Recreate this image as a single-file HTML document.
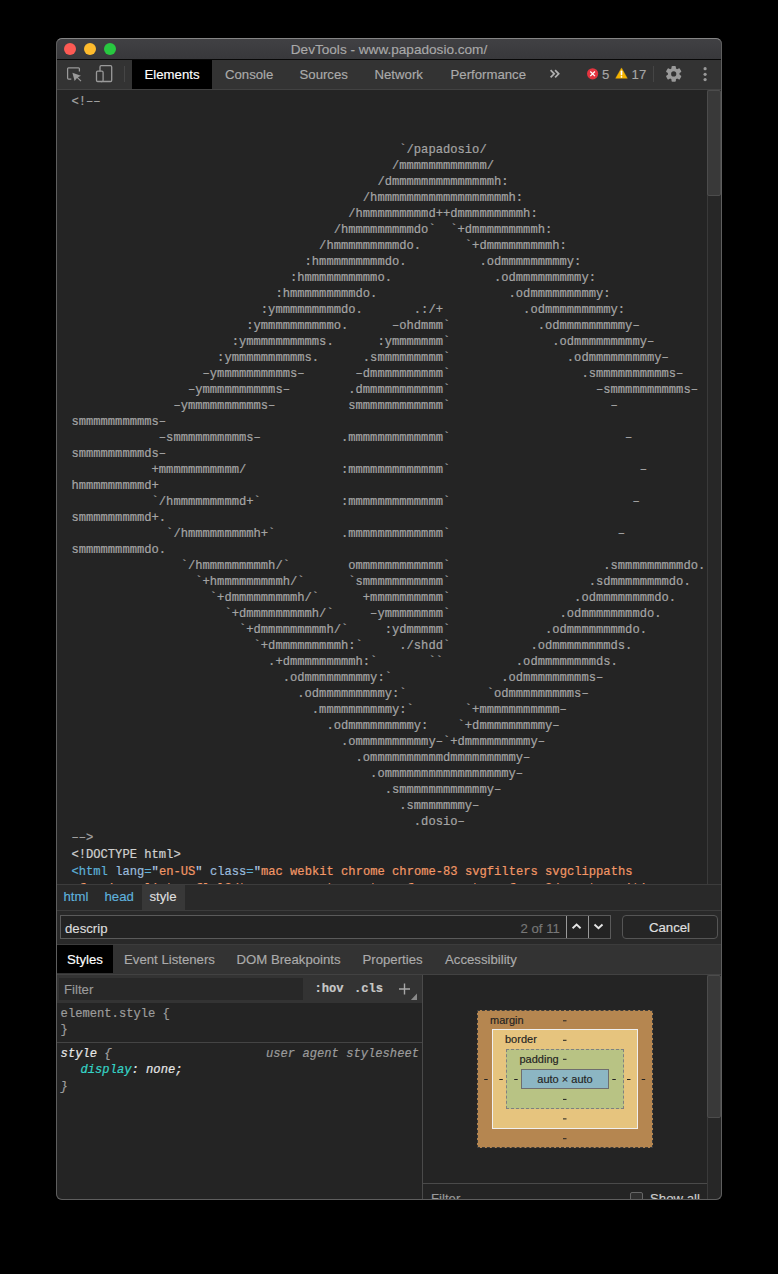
<!DOCTYPE html>
<html>
<head>
<meta charset="utf-8">
<style>
* { box-sizing: border-box; }
html, body { margin: 0; padding: 0; }
body { width: 778px; height: 1274px; background: #000; position: relative; overflow: hidden; font-family: "Liberation Sans", sans-serif; }
.a { position: absolute; }
.win { position: absolute; left: 56px; top: 38px; width: 666px; height: 1162px; border-radius: 6px; background: #242424; overflow: hidden; }
.inner { position: absolute; left: -56px; top: -38px; width: 778px; height: 1274px; }
.winborder { position: absolute; left: 56px; top: 38px; width: 666px; height: 1162px; border-radius: 6px; border: 1px solid #5e5e5e; border-top-color: #858585; pointer-events: none; }
.sans { font-family: "Liberation Sans", sans-serif; white-space: nowrap; -webkit-text-stroke: 0.15px currentColor; }
.mono { font-family: "Liberation Mono", monospace; font-size: 12.15px; white-space: pre; -webkit-text-stroke: 0.2px currentColor; }
pre.tree { position: absolute; left: 71.4px; top: 94.2px; margin: 0; line-height: 16px; color: #a4a4a4; -webkit-text-stroke: 0.2px currentColor; }
.t13 { font-size: 13.2px; line-height: 16px; }
</style>
</head>
<body>
<div class="win"><div class="inner">
  <!-- title bar -->
  <div class="a" style="left:56px;top:38px;width:666px;height:21px;background:linear-gradient(#414144,#38383b);"></div>
  <div class="a sans" style="left:56px;top:42px;width:666px;text-align:center;font-size:13.6px;line-height:16px;color:#a9a9a9;">DevTools - www.papadosio.com/</div>
  <div class="a" style="left:64px;top:43px;width:12px;height:12px;border-radius:50%;background:#fd5a54;"></div>
  <div class="a" style="left:84px;top:43px;width:12px;height:12px;border-radius:50%;background:#febb2d;"></div>
  <div class="a" style="left:104px;top:43px;width:12px;height:12px;border-radius:50%;background:#28c840;"></div>
  <div class="a" style="left:56px;top:59px;width:666px;height:1px;background:#080808;"></div>
  <!-- toolbar -->
  <div class="a" style="left:56px;top:60px;width:666px;height:29px;background:#333333;"></div>
  <div class="a" style="left:56px;top:89px;width:666px;height:1px;background:#424242;"></div>
  <div class="a" style="left:124px;top:66px;width:1px;height:16px;background:#454545;"></div>
  <div class="a" style="left:653px;top:66px;width:1px;height:16px;background:#454545;"></div>
  <div class="a" style="left:132px;top:60px;width:80px;height:29px;background:#000;"></div>
  <div class="a sans t13" style="left:144.5px;top:67px;color:#fff;">Elements</div>
  <div class="a sans t13" style="left:225px;top:67px;color:#ababab;">Console</div>
  <div class="a sans t13" style="left:299.5px;top:67px;color:#ababab;">Sources</div>
  <div class="a sans t13" style="left:374.5px;top:67px;color:#ababab;">Network</div>
  <div class="a sans t13" style="left:450.5px;top:67px;color:#ababab;">Performance</div>
  <div class="a sans t13" style="left:602px;top:66.5px;color:#a6a6a6;">5</div>
  <div class="a sans t13" style="left:631.6px;top:66.5px;color:#a6a6a6;">17</div>

  <!-- elements tree -->
  <div class="a" style="left:56px;top:90px;width:651px;height:794px;overflow:hidden;">
    <div class="a" style="left:-56px;top:-90px;width:778px;height:1274px;">
<pre class="tree mono">&lt;!––


                                             `/papadosio/
                                            /mmmmmmmmmmmm/
                                          /dmmmmmmmmmmmmmmh:
                                        /hmmmmmmmmmmmmmmmmmmh:
                                      /hmmmmmmmmmd++dmmmmmmmmmh:
                                    /hmmmmmmmmmdo`  `+dmmmmmmmmmh:
                                  /hmmmmmmmmmdo.      `+dmmmmmmmmmh:
                                :hmmmmmmmmmdo.          .odmmmmmmmmmy:
                              :hmmmmmmmmmmo.              .odmmmmmmmmmy:
                            :hmmmmmmmmmdo.                  .odmmmmmmmmmy:
                          :ymmmmmmmmmdo.       .:/+           .odmmmmmmmmmy:
                        :ymmmmmmmmmmo.      –ohdmmm`            .odmmmmmmmmmy–
                      :ymmmmmmmmmms.      :ymmmmmmm`              .odmmmmmmmmmy–
                    :ymmmmmmmmmms.      .smmmmmmmmm`                .odmmmmmmmmmy–
                  –ymmmmmmmmmms–       –dmmmmmmmmmm`                  .smmmmmmmmmms–
                –ymmmmmmmmmms–        .dmmmmmmmmmmm`                    –smmmmmmmmmms–
              –ymmmmmmmmmms–          smmmmmmmmmmmm`                      –
smmmmmmmmmms–
            –smmmmmmmmmms–           .mmmmmmmmmmmmm`                        –
smmmmmmmmmds–
           +mmmmmmmmmmm/             :mmmmmmmmmmmmm`                          –
hmmmmmmmmmd+
           `/hmmmmmmmmmd+`           :mmmmmmmmmmmmm`                         –
smmmmmmmmmd+.
             `/hmmmmmmmmmh+`         .mmmmmmmmmmmmm`                       –
smmmmmmmmmdo.
               `/hmmmmmmmmmh/`        ommmmmmmmmmmm`                     .smmmmmmmmmdo.
                 `+hmmmmmmmmmh/`      `smmmmmmmmmmm`                   .sdmmmmmmmmdo.
                   `+dmmmmmmmmmh/`      +mmmmmmmmmm`                 .odmmmmmmmmdo.
                     `+dmmmmmmmmmh/`     –ymmmmmmmm`               .odmmmmmmmmdo.
                       `+dmmmmmmmmmh/`     :ydmmmmm`             .odmmmmmmmmdo.
                         `+dmmmmmmmmmh:`     ./shdd`           .odmmmmmmmmds.
                           .+dmmmmmmmmmh:`       ``          .odmmmmmmmmds.
                             .odmmmmmmmmmy:`               .odmmmmmmmmms–
                               .odmmmmmmmmmy:`           `odmmmmmmmmms–
                                 .mmmmmmmmmmy:`       `+mmmmmmmmmmm–
                                   .odmmmmmmmmmy:    `+dmmmmmmmmmy–
                                     .ommmmmmmmmmy–`+dmmmmmmmmmy–
                                       .ommmmmmmmmmdmmmmmmmmmy–
                                         .ommmmmmmmmmmmmmmmmy–
                                           .smmmmmmmmmmmmy–
                                             .smmmmmmmy–
                                               .dosio–
––&gt;</pre>
<pre class="tree mono" style="top:847.1px"><span style="color:#d0d0d0">&lt;!DOCTYPE html&gt;</span></pre>
<pre class="tree mono" style="top:864.3px;line-height:16.6px"><span style="color:#5db0d7">&lt;html</span> <span style="color:#9bbbdc">lang</span><span style="color:#5db0d7">=</span><span style="color:#b4cde6">"</span><span style="color:#f29766">en-US</span><span style="color:#b4cde6">"</span> <span style="color:#9bbbdc">class</span><span style="color:#5db0d7">=</span><span style="color:#b4cde6">"</span><span style="color:#f29766">mac webkit chrome chrome-83 svgfilters svgclippaths</span>
<span style="color:#f29766"> f   i    li t   fl l3dt           t  csstransforms csstransforms3d csstransitions</span></pre>
    </div>
  </div>
  <!-- elements scrollbar -->
  <div class="a" style="left:707px;top:90px;width:15px;height:794px;background:#272727;border-left:1px solid #3a3a3a;"></div>
  <div class="a" style="left:707px;top:90px;width:14px;height:106px;background:#393939;border:1px solid #4c4c4c;border-radius:2px;"></div>

  <!-- breadcrumbs -->
  <div class="a" style="left:56px;top:884px;width:666px;height:1px;background:#3c3c3c;"></div>
  <div class="a" style="left:56px;top:885px;width:666px;height:25px;background:#292929;"></div>
  <div class="a" style="left:142px;top:885px;width:43px;height:25px;background:#383838;"></div>
  <div class="a sans t13" style="left:63.5px;top:889.3px;color:#5eb1dd;">html</div>
  <div class="a sans t13" style="left:104.5px;top:889.3px;color:#5eb1dd;">head</div>
  <div class="a sans t13" style="left:149.5px;top:889.3px;color:#dedede;">style</div>
  <div class="a" style="left:56px;top:910px;width:666px;height:1px;background:#3c3c3c;"></div>

  <!-- search bar -->
  <div class="a" style="left:56px;top:911px;width:666px;height:33px;background:#292929;"></div>
  <div class="a" style="left:60px;top:915px;width:551px;height:24px;background:#232323;border:1px solid #5a5a5a;border-radius:0;"></div>
  <div class="a sans t13" style="left:65px;top:921px;color:#dcdcdc;">descrip</div>
  <div class="a sans t13" style="left:520.5px;top:921px;color:#777;">2 of 11</div>
  <div class="a" style="left:566px;top:916px;width:1px;height:22px;background:#9a9a9a;"></div>
  <div class="a" style="left:588px;top:916px;width:1px;height:22px;background:#9a9a9a;"></div>
  <div class="a" style="left:622px;top:915px;width:96px;height:24px;background:#252525;border:1px solid #555;border-radius:4px;"></div>
  <div class="a sans t13" style="left:649px;top:920px;color:#e0e0e0;">Cancel</div>
  <div class="a" style="left:56px;top:944px;width:666px;height:1px;background:#3c3c3c;"></div>

  <!-- lower tabs -->
  <div class="a" style="left:56px;top:945px;width:666px;height:29px;background:#333333;"></div>
  <div class="a" style="left:57px;top:945px;width:56px;height:28px;background:#000;"></div>
  <div class="a sans t13" style="left:67px;top:952px;color:#fff;">Styles</div>
  <div class="a sans t13" style="left:124px;top:952px;color:#ababab;">Event Listeners</div>
  <div class="a sans t13" style="left:236.5px;top:952px;color:#ababab;">DOM Breakpoints</div>
  <div class="a sans t13" style="left:362.5px;top:952px;color:#ababab;">Properties</div>
  <div class="a sans t13" style="left:445px;top:952px;color:#ababab;">Accessibility</div>
  <div class="a" style="left:56px;top:974px;width:666px;height:1px;background:#424242;"></div>

  <!-- styles pane -->
  <div class="a" style="left:56px;top:975px;width:367px;height:28px;background:#333333;"></div>
  <div class="a" style="left:58.5px;top:978px;width:244.5px;height:22px;background:#282828;"></div>
  <div class="a sans t13" style="left:64px;top:982px;color:#9a9a9a;">Filter</div>
  <div class="a mono" style="left:314.5px;top:981px;line-height:16px;color:#c8c8c8;font-weight:bold;">:hov</div>
  <div class="a mono" style="left:354px;top:981px;line-height:16px;color:#c8c8c8;font-weight:bold;">.cls</div>
  <div class="a" style="left:422px;top:975px;width:1px;height:225px;background:#4a4a4a;"></div>
  <div class="a" style="left:56px;top:1042px;width:366px;height:1px;background:#444;"></div>
  <pre class="a mono" style="margin:0;left:60.6px;top:1005.5px;line-height:16.8px;color:#9c9c9c;">element.style {
}</pre>
  <pre class="a mono" style="margin:0;left:60.6px;top:1045.8px;line-height:16.5px;color:#a0a0a0;"><i style="color:#e6e6e6">style</i> <i>{</i>

<i>}</i></pre>
  <pre class="a mono" style="margin:0;left:80.5px;top:1062.2px;line-height:16.5px;"><i style="color:#35d4c7">display</i><i style="color:#e6e6e6">: none;</i></pre>
  <pre class="a mono" style="margin:0;left:266px;top:1045.8px;line-height:16.5px;color:#9a9a9a;"><i>user agent stylesheet</i></pre>

  <!-- box model pane -->
  <div class="a" style="left:707px;top:975px;width:15px;height:225px;background:#272727;border-left:1px solid #3a3a3a;"></div>
  <div class="a" style="left:707px;top:975px;width:14px;height:143px;background:#393939;border:1px solid #4c4c4c;border-radius:2px;"></div>
  <div class="a" style="left:477px;top:1010px;width:176px;height:138px;background:#b58650;border:1px dashed #3a3a3a;"></div>
  <div class="a" style="left:492px;top:1029px;width:146px;height:100px;background:#e6c47e;border:1px solid #f0f0f0;"></div>
  <div class="a" style="left:506px;top:1049px;width:118px;height:60px;background:#b8c384;border:1px dashed #808080;"></div>
  <div class="a" style="left:521px;top:1069px;width:88px;height:20px;background:#8cb6c3;border:1px solid #6e6e6e;"></div>
  <div class="a sans" style="left:490px;top:1013.2px;font-size:11px;line-height:14px;color:#222;">margin</div>
  <div class="a sans" style="left:505px;top:1032.2px;font-size:11px;line-height:14px;color:#222;">border</div>
  <div class="a sans" style="left:519.5px;top:1052.2px;font-size:11px;line-height:14px;color:#222;">padding</div>
  <div class="a sans" style="left:521px;top:1072px;width:88px;text-align:center;font-size:11px;line-height:14px;color:#222;">auto × auto</div>
  <div class="a" style="left:423px;top:1183px;width:284px;height:1px;background:#4a4a4a;"></div>
  <div class="a sans t13" style="left:431px;top:1191px;color:#9a9a9a;">Filter</div>
  <div class="a" style="left:630px;top:1192px;width:13px;height:13px;background:#2f2f2f;border:1px solid #666;border-radius:2px;"></div>
  <div class="a sans t13" style="left:650px;top:1191px;color:#cfcfcf;">Show all</div>
</div></div>
<div class="winborder"></div>
<svg class="a" style="left:0;top:0;" width="778" height="1274" viewBox="0 0 778 1274">
  <!-- inspect icon -->
  <path d="M79.4 71.6 V68.7 Q79.4 67.8 78.5 67.8 H68.5 Q67.6 67.8 67.6 68.7 V78.1 Q67.6 79 68.5 79 H71.3" fill="none" stroke="#9a9a9a" stroke-width="1.25"/>
  <path d="M72.4 72.8 L81 75.7 L77.9 77.2 L81.4 80.8 L80.6 81.5 L77 78 L74.6 81.1 Z" fill="#9a9a9a"/>
  <!-- device icon -->
  <rect x="100" y="65.7" width="11.7" height="15.8" rx="1.2" fill="none" stroke="#9a9a9a" stroke-width="1.3"/>
  <rect x="96.5" y="71.2" width="6.6" height="10.3" rx="1.2" fill="#333" stroke="#9a9a9a" stroke-width="1.3"/>
  <!-- chevrons -->
  <path d="M550.6 70.2 L554.2 73.8 L550.6 77.4 M555.1 70.2 L558.7 73.8 L555.1 77.4" fill="none" stroke="#b0b0b0" stroke-width="1.7"/>
  <!-- error -->
  <circle cx="592.6" cy="73.8" r="5.6" fill="#e3343f"/>
  <path d="M590.3 71.5 L594.9 76.1 M594.9 71.5 L590.3 76.1" stroke="#fff" stroke-width="1.3"/>
  <!-- warning -->
  <path d="M621.5 67.9 L627.3 78.3 L615.7 78.3 Z" fill="#f4b300" stroke="#f4b300" stroke-width="0.4" stroke-linejoin="round"/>
  <path d="M621.5 71.3 L621.5 74.6" stroke="#fff" stroke-width="1.6" stroke-linecap="round"/><circle cx="621.5" cy="76.8" r="0.85" fill="#fff"/>
  <!-- gear -->
  <g transform="translate(673.7 73.9)" fill="#9a9a9a">
    <circle r="5.9"/>
    <rect x="-2.2" y="-7.9" width="4.4" height="15.8" rx="1"/>
    <rect x="-2.2" y="-7.9" width="4.4" height="15.8" rx="1" transform="rotate(60)"/>
    <rect x="-2.2" y="-7.9" width="4.4" height="15.8" rx="1" transform="rotate(-60)"/>
    <circle r="2.6" fill="#333"/>
  </g>
  <!-- kebab -->
  <circle cx="705.1" cy="68.7" r="1.6" fill="#9a9a9a"/>
  <circle cx="705.1" cy="74.3" r="1.6" fill="#9a9a9a"/>
  <circle cx="705.1" cy="79.6" r="1.6" fill="#9a9a9a"/>
  <!-- search arrows -->
  <path d="M572.6 928.2 L576.6 924.6 L580.6 928.2" fill="none" stroke="#e6e6e6" stroke-width="1.9"/>
  <path d="M594.5 924.5 L598.5 928.1 L602.5 924.5" fill="none" stroke="#e6e6e6" stroke-width="1.9"/>
  <!-- plus -->
  <path d="M404.5 983.5 V994.5 M399 989 H410" stroke="#a8a8a8" stroke-width="1.4"/>
  <path d="M417 993.6 V1000 H410.9 Z" fill="#8a8a8a"/>
  <!-- box model dashes -->
  <g fill="#222">
    <rect x="563" y="1020.3" width="3.5" height="1"/>
    <rect x="563" y="1039.8" width="3.5" height="1"/>
    <rect x="563" y="1058.8" width="3.5" height="1"/>
    <rect x="563" y="1098.9" width="3.5" height="1"/>
    <rect x="563" y="1118.4" width="3.5" height="1"/>
    <rect x="563" y="1138.2" width="3.5" height="1"/>
    <rect x="484.2" y="1079" width="3.5" height="1"/>
    <rect x="499.3" y="1079" width="3.5" height="1"/>
    <rect x="514.2" y="1079" width="3.5" height="1"/>
    <rect x="612.3" y="1079" width="3.5" height="1"/>
    <rect x="627" y="1079" width="3.5" height="1"/>
    <rect x="641.7" y="1079" width="3.5" height="1"/>
  </g>
</svg>
</body>
</html>
